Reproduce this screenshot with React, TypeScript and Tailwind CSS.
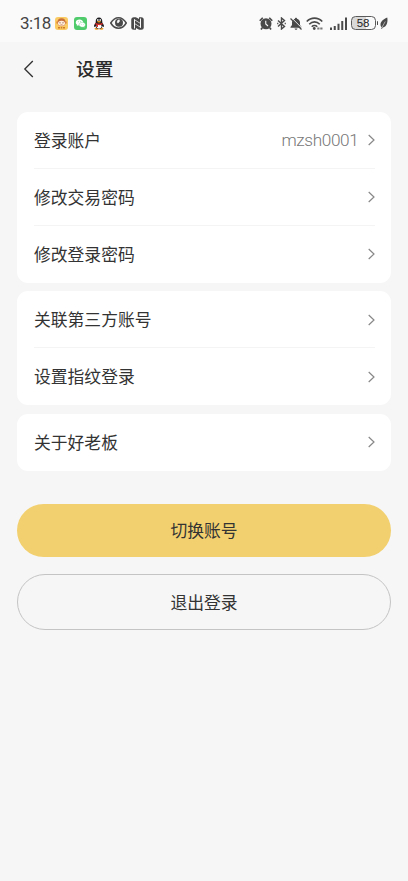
import { clsx } from "clsx";
import * as React from "react";

interface SettingItem {
  label: string;
  value?: string;
}

const groups: SettingItem[][] = [
  [
    { label: "登录账户", value: "mzsh0001" },
    { label: "修改交易密码" },
    { label: "修改登录密码" },
  ],
  [{ label: "关联第三方账号" }, { label: "设置指纹登录" }],
  [{ label: "关于好老板" }],
];

function MonkeyIcon() {
  return (
    <svg aria-hidden="true" className="ml-[5px] h-[13px] w-[13px]" viewBox="0 0 26 26">
      <rect fill="#f9cb62" height="26" rx="6" width="26" />
      <circle cx="4.5" cy="11" fill="#e89a4a" r="2.5" />
      <circle cx="21.5" cy="11" fill="#e89a4a" r="2.5" />
      <circle cx="13" cy="10.5" fill="#c8703a" r="8" />
      <ellipse cx="13" cy="12.5" fill="#ffeede" rx="7" ry="5" />
      <circle cx="10" cy="11.5" fill="#7a3d1c" r="1.2" />
      <circle cx="16" cy="11.5" fill="#7a3d1c" r="1.2" />
      <path d="M11 14.5q2 1.6 4 0" fill="none" stroke="#b9612a" strokeWidth="1.2" />
      <path d="M6 21.5h4M11.5 21.5h3M16 21.5h4" stroke="#cf7a2a" strokeWidth="3" />
    </svg>
  );
}

function WechatIcon() {
  return (
    <svg aria-hidden="true" className="ml-[5.500px] h-[13px] w-[13px]" viewBox="0 0 26 26">
      <rect fill="#4fcb6c" height="26" rx="6" width="26" />
      <path d="M11 5c-4.200 0-7.500 2.600-7.500 6 0 1.900 1 3.500 2.600 4.600l-.6 2.200 2.700-1.300c.9.300 1.800.4 2.800.4 4.200 0 7.500-2.600 7.500-5.900s-3.300-6-7.500-6z" fill="#fff" />
      <path d="M16.500 10.500c-3.500 0-6.300 2.300-6.300 5s2.800 5 6.300 5c.8 0 1.600-.1 2.300-.3l2.200 1.200-.5-1.900c1.400-.9 2.300-2.300 2.300-4 0-2.700-2.800-5-6.300-5z" fill="#fff" stroke="#4fcb6c" strokeWidth=".8" />
      <g fill="#4fcb6c">
        <circle cx="8.500" cy="9.500" r=".8" />
        <circle cx="13" cy="9" r=".8" />
        <circle cx="14.500" cy="14.500" r=".7" />
        <circle cx="18.500" cy="14.500" r=".7" />
      </g>
    </svg>
  );
}

function PenguinIcon() {
  return (
    <svg aria-hidden="true" className="ml-[6px] h-[13px] w-[12px]" viewBox="0 0 24 26">
      <ellipse cx="7.500" cy="23.500" fill="#e99a24" rx="4.500" ry="2" />
      <ellipse cx="16.500" cy="23.500" fill="#e99a24" rx="4.500" ry="2" />
      <path d="M12 1C7.500 1 5.500 4.500 5.500 8.500v2.500C3.500 13.500 1.500 17 2 19.500c.7 1 2-.3 2.700-1.300C5.500 22 8.500 24 12 24s6.500-2 7.300-5.800c.7 1 2 2.300 2.700 1.300.5-2.500-1.500-6-3.500-8.500V8.500C18.500 4.500 16.500 1 12 1z" fill="#1b1b1f" />
      <ellipse cx="12" cy="18.500" fill="#fff" rx="5" ry="4.800" />
      <ellipse cx="9.700" cy="6" fill="#fff" rx="1.600" ry="2.200" />
      <ellipse cx="14.300" cy="6" fill="#fff" rx="1.600" ry="2.200" />
      <ellipse cx="12" cy="9.500" fill="#f0a020" rx="4" ry="1.400" />
      <path d="M5 11.500c4 2.500 10 2.500 14 0l.6 3c-3.500 1.800-7 2-9.600 1.600v4H7v-4.800l-2.500-1z" fill="#d92f2c" />
    </svg>
  );
}

function EyeIcon() {
  return (
    <svg aria-hidden="true" className="ml-[5px] h-3 w-[17px]" viewBox="0 0 34 24">
      <path d="M1.500 12C6 4.500 11.500 1.500 17 1.500S28 4.500 32.500 12C28 19.500 22.500 22.500 17 22.500S6 19.500 1.500 12z" fill="none" stroke="#4a4a4a" strokeWidth="3" />
      <circle cx="18" cy="11.500" fill="#4a4a4a" r="8" />
      <path d="M14.500 11.500a5 5 0 0 1 4-6 4 4 0 0 1-4 6z" fill="#fafafa" stroke="#fafafa" />
    </svg>
  );
}

function NfcIcon() {
  return (
    <svg aria-hidden="true" className="ml-[4.500px] h-[13px] w-[13px]" viewBox="0 0 26 26">
      <rect fill="#4a4a4a" height="25" rx="5" width="25" x=".5" y=".5" />
      <path d="M7 23V4.500M19 3v18.500" stroke="#fafafa" strokeWidth="2" />
      <path d="M7 5.500 19 13M7 13l12 7.500" stroke="#fafafa" strokeWidth="1.500" />
      <path d="M9.500 0 16 4V0zM10 26v-4L16.500 26z" fill="#fafafa" />
    </svg>
  );
}

function AlarmIcon() {
  return (
    <svg aria-hidden="true" className="h-[13px] w-[14px]" viewBox="0 0 28 26">
      <circle cx="14" cy="13.500" fill="#4a4a4a" r="11" />
      <path d="M1.500 7.500 7.500 1.500M26.500 7.500 20.500 1.500M6.500 21.500 4 25M21.500 21.500 24 25" stroke="#4a4a4a" strokeWidth="3.400" />
      <path d="M13.500 7.500v6.500l4.500 4" fill="none" stroke="#fafafa" strokeWidth="2.200" />
    </svg>
  );
}

function BluetoothIcon() {
  return (
    <svg aria-hidden="true" className="ml-[4px] h-[13px] w-[9px]" viewBox="0 0 18 26">
      <path d="M2 7l13 12-6 5V2l6 5L2 19" fill="none" stroke="#4a4a4a" strokeWidth="2.800" />
      <path d="M1.500 11.500v3M16.500 11.500v3" stroke="#4a4a4a" strokeWidth="2.400" />
    </svg>
  );
}

function BellOffIcon() {
  return (
    <svg aria-hidden="true" className="ml-[4px] h-[13px] w-3" viewBox="0 0 24 26">
      <path d="M12 1.500c-1.200 0-2 .8-2 2C6.500 4.500 4 7.500 4 11v5L1 20v1.500h22V20l-3-4v-5c0-3.500-2.500-6.500-6-7.500 0-1.200-.8-2-2-2zM9 23c.5 1.500 1.500 2.500 3 2.500s2.500-1 3-2.500z" fill="#4a4a4a" />
      <path d="M3 1.500 24 22.500" stroke="#fafafa" strokeWidth="2" />
      <path d="M1 3 23 25" stroke="#4a4a4a" strokeWidth="2.600" />
    </svg>
  );
}

function WifiIcon() {
  return (
    <svg aria-hidden="true" className="ml-[4px] h-[13px] w-[17px]" viewBox="0 0 34 26">
      <g fill="none" stroke="#4a4a4a" strokeWidth="3.200">
        <path d="M1.500 9C10 0 24 0 32.500 9" />
        <path d="M6.500 14.500c6-6.300 15-6.300 21 0" />
        <path d="M11.500 19.500c3-3.200 8-3.200 11 0" />
      </g>
      <circle cx="16.500" cy="23" fill="#4a4a4a" r="2.800" />
      <path d="M22.500 23h4.500M28.500 23h4.500" stroke="#777" strokeWidth="4" />
    </svg>
  );
}

function SignalIcon() {
  return (
    <svg aria-hidden="true" className="ml-[7px] h-[13px] w-[17px]" viewBox="0 0 34 26">
      <path d="M2 26v-5M9.500 26v-8M17 26V13.500M24.500 26V8M32 26V1" stroke="#4a4a4a" strokeWidth="4" />
    </svg>
  );
}

function Battery({ level }: { level: number }) {
  return (
    <div className="ml-[4px] flex items-center">
      <span className="flex h-[14px] w-[25px] items-center justify-center rounded-[4.500px] border border-[#5a5a5a] bg-[linear-gradient(90deg,#d9d9d9_60%,#fafafa_60%)] pt-px font-['Liberation_Sans',sans-serif] text-[11.500px] leading-none tracking-[-0.2px] text-[#222]">
        {level}
      </span>
      <span className="ml-px h-1 w-[1.500px] rounded-full bg-[#4a4a4a]" />
    </div>
  );
}

function LeafIcon() {
  return (
    <svg aria-hidden="true" className="ml-[2px] h-3 w-[8px]" viewBox="0 0 16 24">
      <path d="M14.500 1C8 4 1 8.500 1 15c0 2.500 1 4.500 2.500 5.500L2 23.500h2L5.500 21C12 21 16.500 12 14.500 1z" fill="#4a4a4a" />
      <path d="M3.500 21.500 10.500 9" stroke="#fafafa" strokeWidth="1.100" />
    </svg>
  );
}

function StatusBar() {
  return (
    <div className="flex h-[42px] items-center bg-[#fafafa] pt-1 pr-5 pl-5">
      <span className="w-[30px] pt-px font-['Roboto',sans-serif] text-[17px] leading-none tracking-[-0.500px] whitespace-nowrap text-[#444]">
        3:18
      </span>
      <MonkeyIcon />
      <WechatIcon />
      <PenguinIcon />
      <EyeIcon />
      <NfcIcon />
      <div className="ml-auto flex items-center">
        <AlarmIcon />
        <BluetoothIcon />
        <BellOffIcon />
        <WifiIcon />
        <SignalIcon />
        <Battery level={58} />
        <LeafIcon />
      </div>
    </div>
  );
}

function Header() {
  return (
    <header className="flex h-[54px] items-center pl-[23px]">
      <button aria-label="返回" className="flex w-[53px]" type="button">
        <svg className="h-[18px] w-[11px]" fill="none" viewBox="0 0 11 18">
          <path d="M9.800 1 1.800 9l8 8" stroke="#303030" strokeWidth="1.300" />
        </svg>
      </button>
      <h1 className="pb-px text-[18.700px] leading-none font-medium text-[#2a2a2a]">设置</h1>
    </header>
  );
}

function SettingRow({ item, last }: { item: SettingItem; last: boolean }) {
  return (
    <li
      className={clsx(
        "flex h-[56.900px] items-center border-b pt-px",
        last ? "border-transparent" : "border-[#f4f4f4]",
      )}
    >
      <span className="text-[16.800px] leading-none text-[#333]">{item.label}</span>
      {item.value && (
        <span className="ml-auto pt-px font-['Roboto',sans-serif] text-[17.200px] leading-none font-light tracking-[-0.350px] text-[#777]">
          {item.value}
        </span>
      )}
      <svg
        aria-hidden="true"
        className={clsx("h-3 w-[8px]", item.value ? "ml-2" : "ml-auto")}
        fill="none"
        viewBox="0 0 8 12"
      >
        <path d="m1.700 1 5.300 5-5.300 5" stroke="#888" strokeWidth="1.200" />
      </svg>
    </li>
  );
}

function SettingGroup({ items }: { items: SettingItem[] }) {
  return (
    <ul className="rounded-[11px] bg-white pr-[16.500px] pl-[17px]">
      {items.map((item, index) => (
        <SettingRow item={item} key={item.label} last={index === items.length - 1} />
      ))}
    </ul>
  );
}

export default function App() {
  return (
    <div className="min-h-screen bg-[#f6f6f6] font-['Noto_Sans_CJK_SC',sans-serif]">
      <StatusBar />
      <Header />
      <main className="px-[17px] pt-4">
        <div className="grid gap-[8.700px]">
          {groups.map((items) => (
            <SettingGroup items={items} key={items[0].label} />
          ))}
        </div>
        <div className="mt-[33px] grid gap-[17px]">
          <button className="h-[53px] rounded-full bg-[#f2d06f] pt-px text-[16.800px] leading-none text-[#333]" type="button">
            切换账号
          </button>
          <button className="h-14 rounded-full border border-[#c4c4c4] pt-px text-[16.800px] leading-none text-[#333]" type="button">
            退出登录
          </button>
        </div>
      </main>
    </div>
  );
}
